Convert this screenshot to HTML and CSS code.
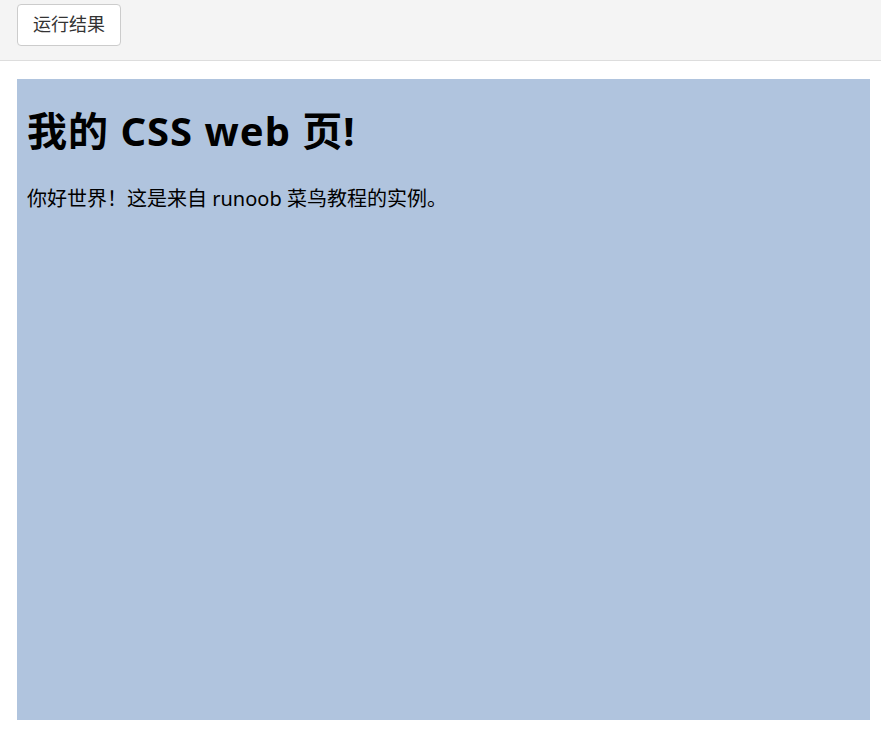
FILE: index.html
```html
<!DOCTYPE html>
<html lang="zh">
<head>
<meta charset="utf-8">
<title>运行结果</title>
<link rel="stylesheet" href="styles.css">
</head>
<body>
<div class="toolbar">
  <button class="run-btn" type="button">运行结果</button>
</div>
<div class="result">
  <div class="panel">
    <h1 class="title">我的 CSS web 页!</h1>
    <p class="text">你好世界！这是来自 runoob 菜鸟教程的实例。</p>
  </div>
</div>
</body>
</html>
```

FILE: styles.css
```css
html, body {
  margin: 0;
  padding: 0;
  background: #ffffff;
  font-family: "Noto Sans", "Noto Sans CJK SC", sans-serif;
}
.toolbar {
  box-sizing: border-box;
  height: 61px;
  background: #f4f4f4;
  border-bottom: 1px solid #dddddd;
  padding: 4px 17px 0;
}
.run-btn {
  box-sizing: border-box;
  height: 42px;
  width: 104px;
  background: #ffffff;
  border: 1px solid #cccccc;
  border-radius: 4px;
  font-family: "Noto Sans CJK SC", sans-serif;
  font-size: 18px;
  color: #333333;
  padding: 0 0 5px;
}
.result {
  padding: 18px 11px 10px 17px;
}
.panel {
  display: flow-root;
  box-sizing: border-box;
  height: 641px;
  padding: 0 10px;
  background: #b0c4de;
}
.title {
  font-size: 40px;
  line-height: 52px;
  font-weight: bold;
  letter-spacing: 1px;
  margin: 26px 0 28px;
  color: #000000;
}
.text {
  font-size: 20px;
  line-height: 28px;
  margin: 0;
  color: #000000;
}
```
